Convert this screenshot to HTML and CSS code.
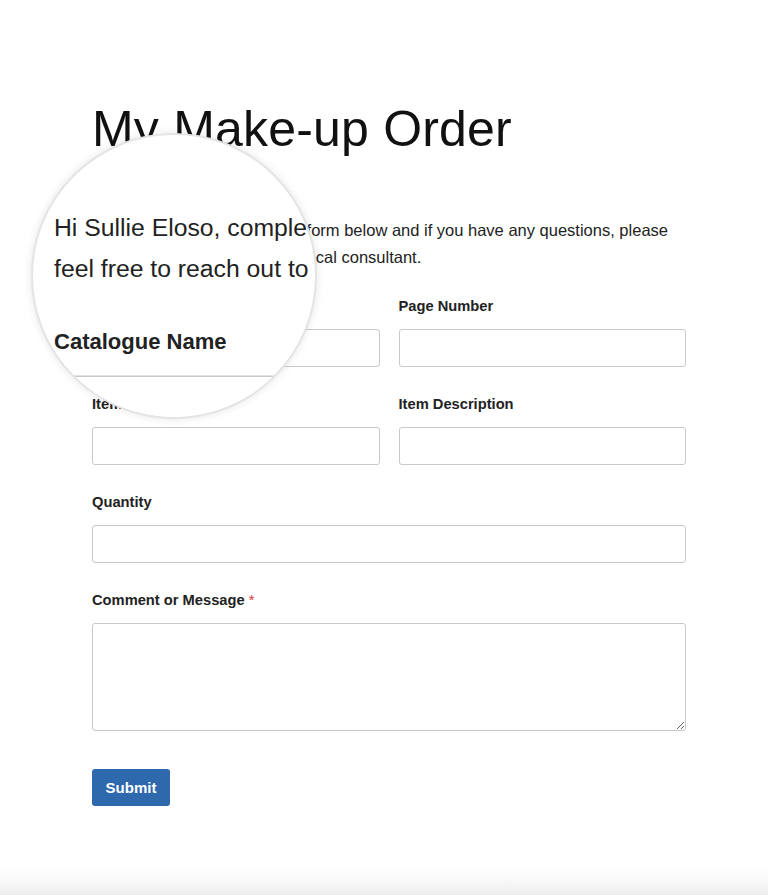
FILE: index.html
```html
<!DOCTYPE html>
<html lang="en">
<head>
<meta charset="utf-8">
<title>My Make-up Order</title>
<link rel="stylesheet" href="styles.css">
</head>
<body>
<main class="page">
  <h1 class="title">My Make-up Order</h1>
  <p class="intro">Hi Sullie Eloso, complete the form below and if you have any questions, please feel free to reach out to your local consultant.</p>
  <form class="form">
    <div class="row two">
      <div class="field"><label class="label">Catalogue Name</label><input class="input" type="text"></div>
      <div class="field"><label class="label">Page Number</label><input class="input" type="text"></div>
    </div>
    <div class="row two">
      <div class="field"><label class="label">Item Number</label><input class="input" type="text"></div>
      <div class="field"><label class="label">Item Description</label><input class="input" type="text"></div>
    </div>
    <div class="field"><label class="label">Quantity</label><input class="input" type="text"></div>
    <div class="field"><label class="label">Comment or Message <span class="req">*</span></label><textarea class="input area"></textarea></div>
    <button class="submit" type="button">Submit</button>
  </form>
</main>

<div class="lens" aria-hidden="true">
  <div class="lens-view">
    <div class="page">
      <h1 class="title">My Make-up Order</h1>
      <p class="intro">Hi Sullie Eloso, complete the form below and if you have any questions, please feel free to reach out to your local consultant.</p>
      <div class="form">
        <div class="row two">
          <div class="field"><span class="label">Catalogue Name</span><div class="input"></div></div>
          <div class="field"><span class="label">Page Number</span><div class="input"></div></div>
        </div>
      </div>
    </div>
  </div>
</div>
</body>
</html>
```

FILE: styles.css
```css
html { height: 100%; }
body {
  margin: 0;
  min-height: 100%;
  position: relative;
  font-family: "Liberation Sans", Arial, sans-serif;
  color: #1e1e1e;
  background: linear-gradient(to bottom, #ffffff 0, #ffffff calc(100% - 30px), #fbfbfb calc(100% - 18px), #ededed 100%);
  overflow: hidden;
}
.page {
  padding: 99px 82px 0 92px;
  width: 594px;
}
.title {
  margin: 0;
  font-size: 50px;
  line-height: 60px;
  font-weight: 400;
  color: #111;
  letter-spacing: 0.2px;
}
.intro {
  margin: 58px 0 25px;
  font-size: 16.5px;
  line-height: 27px;
  color: #222;
}
.form { display: flex; flex-direction: column; }
.row.two {
  display: grid;
  grid-template-columns: 1fr 1fr;
  column-gap: 19px;
}
.field {
  display: flex;
  flex-direction: column;
  margin-bottom: 27px;
}
.label {
  display: block;
  font-size: 14.7px;
  line-height: 20px;
  font-weight: 700;
  color: #222;
  margin-bottom: 13px;
}
.req { color: #d63638; font-weight: 400; }
.input {
  box-sizing: border-box;
  display: block;
  width: 100%;
  height: 38px;
  margin: 0;
  border: 1px solid #c9c9c9;
  border-radius: 3px;
  background: #fff;
  font: inherit;
}
.area { height: 108px; resize: vertical; }
.submit {
  align-self: flex-start;
  margin-top: 11px;
  width: 78px;
  height: 37px;
  border: 0;
  border-radius: 3px;
  background: #2e68ad;
  color: #fff;
  font-family: "Liberation Sans", Arial, sans-serif;
  font-size: 15px;
  font-weight: 700;
  padding: 0;
}
.lens {
  position: absolute;
  left: 31px;
  top: 133px;
  width: 282px;
  height: 282px;
  border: 2px solid #e4e4e4;
  border-radius: 50%;
  overflow: hidden;
  background: #fff;
  box-shadow: 0 0 8px rgba(0, 0, 0, 0.10);
}
.lens-view {
  position: absolute;
  left: -33px;
  top: -135px;
  width: 768px;
  transform: scale(1.5);
  transform-origin: 168px 236px;
}
```
